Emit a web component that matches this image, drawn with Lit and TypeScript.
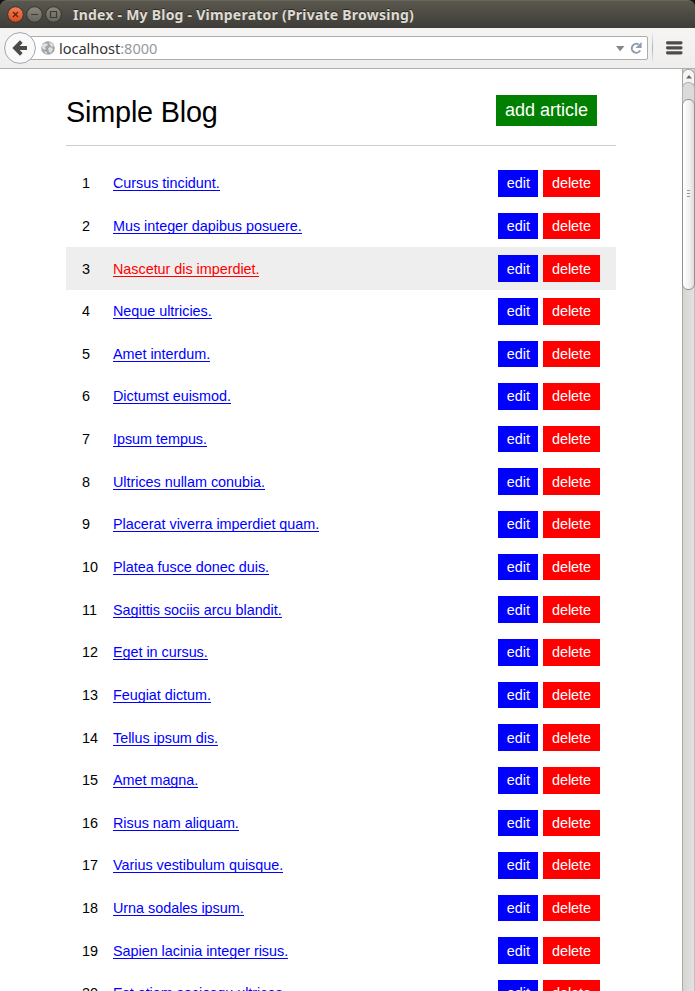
import { LitElement, html, css } from "lit";
import { customElement, property } from "lit/decorators.js";
import { classMap } from "lit/directives/class-map.js";

const ARTICLES = [
  "Cursus tincidunt.",
  "Mus integer dapibus posuere.",
  "Nascetur dis imperdiet.",
  "Neque ultricies.",
  "Amet interdum.",
  "Dictumst euismod.",
  "Ipsum tempus.",
  "Ultrices nullam conubia.",
  "Placerat viverra imperdiet quam.",
  "Platea fusce donec duis.",
  "Sagittis sociis arcu blandit.",
  "Eget in cursus.",
  "Feugiat dictum.",
  "Tellus ipsum dis.",
  "Amet magna.",
  "Risus nam aliquam.",
  "Varius vestibulum quisque.",
  "Urna sodales ipsum.",
  "Sapien lacinia integer risus.",
  "Est etiam sociosqu ultrices.",
];

@customElement("window-titlebar")
export class WindowTitlebar extends LitElement {
  @property() label = "";
  static styles = css`
    :host { display: block; background: #151412; }
    .bar {
      height: 28px; box-sizing: border-box; display: flex; align-items: center;
      padding-left: 7px; border-radius: 7px 7px 0 0;
      background: linear-gradient(#5a574e, #3e3d38);
      border-top: 1px solid #69665b;
    }
    svg { display: block; flex: none; }
    .label {
      margin-left: 11px; color: #dfdbd2; white-space: nowrap;
      font: bold 14px/26px "Noto Sans", sans-serif; letter-spacing: 0.23px;
      text-shadow: 0 -1px 0 #2a2925;
    }
  `;
  render() {
    return html`<div class="bar">
      <svg width="55" height="18" viewBox="0 0 55 18">
        <defs>
          <linearGradient id="o" x2="0" y2="1"><stop stop-color="#f48059"/><stop offset="1" stop-color="#dc4b18"/></linearGradient>
          <linearGradient id="g" x2="0" y2="1"><stop stop-color="#8b887f"/><stop offset="1" stop-color="#66635c"/></linearGradient>
        </defs>
        <g stroke="#35342f">
          <circle cx="8.5" cy="8.5" r="7.8" fill="url(#o)"/>
          <circle cx="27.5" cy="8.5" r="7.8" fill="url(#g)"/>
          <circle cx="46.5" cy="8.5" r="7.8" fill="url(#g)"/>
        </g>
        <path d="M6 6l5 5M11 6l-5 5" stroke="#5c2410" stroke-width="1.3"/>
        <path d="M24 8.5h7M43.5 5.5h6v6h-6z" fill="none" stroke="#3b3a35" stroke-width="1.2"/>
      </svg>
      <span class="label">${this.label}</span>
    </div>`;
  }
}

@customElement("browser-toolbar")
export class BrowserToolbar extends LitElement {
  @property() host = "";
  @property() port = "";
  static styles = css`
    :host { display: block; }
    .bar {
      height: 41px; box-sizing: border-box; display: flex; align-items: center;
      background: linear-gradient(#f6f5f4, #efeeed); border-bottom: 1px solid #b3b0ab;
      padding: 0 12px 0 4px;
    }
    svg { display: block; flex: none; }
    .back { position: relative; z-index: 1; }
    .url {
      flex: 1; height: 24px; box-sizing: border-box; margin-left: -8px;
      border: 1px solid #b0ada8; border-radius: 0 2px 2px 0; background: #fff;
      display: flex; align-items: center; padding: 0 5px 0 12px;
    }
    .text {
      flex: 1; margin-left: 4px; color: #333;
      font: 14.6px/22px "Noto Sans", sans-serif; letter-spacing: -0.05px;
    }
    .port { color: #999; }
    .sep { width: 1px; height: 32px; margin: 0 13px 0 4px; background: linear-gradient(#eef0f2, #a9b3bd, #eef0f2); }
  `;
  render() {
    return html`<div class="bar">
      <svg class="back" width="32" height="34" viewBox="0 0 32 34">
        <circle cx="16" cy="17" r="15.4" fill="#f9f9f8" stroke="#9ba8b6"/>
        <path d="M17.3 10.6L11 17l6.3 6.4M11.5 17H23" fill="none" stroke="#4b4b4b" stroke-width="3.8"/>
      </svg>
      <div class="url">
        <svg width="14" height="14" viewBox="0 0 14 14">
          <circle cx="7" cy="7" r="6.8" fill="#a3a3a3"/>
          <path d="M1 4l3-2 3 1-1 2-2 1 1 2-2 1-2-2zM8 1l3 1 2 3-2 1-2-2zM7 7l3-1 2 2-2 4-2-1zM3 10l3 1v2L4 12z" fill="#dedede"/>
        </svg>
        <span class="text">${this.host}<span class="port">:${this.port}</span></span>
        <svg width="26" height="16" viewBox="0 0 26 16">
          <path d="M0 6h8.4L4.2 11.3z" fill="#858585"/>
          <path d="M22.6 4.4A4.5 4.5 0 1 0 24.2 10.6" fill="none" stroke="#8f9dac" stroke-width="2"/>
          <path d="M25.6 2v6h-6.2z" fill="#8f9dac"/>
        </svg>
      </div>
      <div class="sep"></div>
      <svg width="17" height="14" viewBox="0 0 17 14">
        <g fill="#4c4c4c"><rect width="16.5" height="3.2" rx="1.4" y=".3"/><rect width="16.5" height="3.2" rx="1.4" y="5.3"/><rect width="16.5" height="3.2" rx="1.4" y="10.3"/></g>
      </svg>
    </div>`;
  }
}

@customElement("page-scrollbar")
export class PageScrollbar extends LitElement {
  static styles = css`
    :host {
      display: flex; flex-direction: column; width: 13px; box-sizing: border-box;
      border-left: 1px solid #aaa9a4; border-right: 1px solid #c5c1bd;
      background: linear-gradient(90deg, #d5d5d3, #e3e2e0);
    }
    .up, .thumb { margin: 0 -1px; box-sizing: border-box; border: 1px solid #a3a29e; background: linear-gradient(90deg, #fff, #f0f0ee 60%, #dedddb); }
    .up { height: 19px; margin-bottom: -6px; border-radius: 6px 6px 0 0; border-bottom: 0; display: flex; justify-content: center; padding-top: 5px; background: #f5f5f4; }
    .cap { height: 23px; margin: 0 -1px -6px; border: 1px solid #b0afab; border-bottom: 0; border-radius: 6px 6px 0 0; box-sizing: border-box; background: #dcdbd9; }
    .thumb { height: 191px; border-color: #92918d; border-radius: 6px; display: flex; align-items: center; justify-content: center; padding-bottom: 2px; }
    svg { display: block; }
  `;
  render() {
    return html`
      <div class="up"><svg width="6" height="4"><path d="M0 3.5L3 0l3 3.5z" fill="#666"/></svg></div>
      <div class="cap"></div>
      <div class="thumb"><svg width="3" height="8"><path d="M0 .5h3M0 3.5h3M0 6.5h3" stroke="#999"/></svg></div>
    `;
  }
}

@customElement("article-row")
export class ArticleRow extends LitElement {
  @property({ type: Number }) number = 0;
  @property() heading = "";
  @property({ type: Boolean }) active = false;
  static styles = css`
    :host { display: block; }
    .row {
      height: 42.641px; box-sizing: border-box; display: flex; align-items: center;
      padding: 0 16px;
    }
    .row.active { background: #eee; }
    .number { width: 31px; padding-bottom: 0.07px; }
    .cell { flex: 1; letter-spacing: -0.03px; padding-bottom: 0.07px; }
    .link { color: #00f; text-decoration: none; border-bottom: 1px solid; line-height: 16px; display: inline-block; height: 15px; }
    .active .link { color: #f00; }
    .actions { display: flex; gap: 5px; }
    .btn {
      height: 26.641px; box-sizing: border-box; padding-bottom: 0.07px; color: #fff;
      display: flex; align-items: center; justify-content: center;
    }
    .edit { width: 40px; background: #00f; text-indent: 0.6px; }
    .delete { width: 57px; background: #f00; }
  `;
  render() {
    return html`<div class=${classMap({ row: true, active: this.active })}>
      <span class="number">${this.number}</span>
      <span class="cell"><a class="link">${this.heading}</a></span>
      <div class="actions"><a class="btn edit">edit</a><a class="btn delete">delete</a></div>
    </div>`;
  }
}

@customElement("app-root")
export class AppRoot extends LitElement {
  static styles = css`
    :host {
      display: flex; flex-direction: column; height: 991px; overflow: hidden;
      background: #fff; color: #000; font: 14.4px "Liberation Sans", Arial, sans-serif;
    }
    .view { flex: 1; min-height: 0; display: flex; overflow: hidden; }
    .page { flex: 1; padding: 0 66px; overflow: hidden; }
    .header {
      height: 77px; box-sizing: border-box; border-bottom: 1px solid #ccc;
      display: flex; justify-content: space-between; align-items: flex-start; padding: 26px 19px 0 0;
    }
    .title { font-size: 28.8px; line-height: 34px; letter-spacing: -0.18px; }
    .add { width: 101px; height: 31px; background: #008000; color: #fff; font-size: 18px; line-height: 31px; text-align: center; }
    .list { padding-top: 15.95px; }
  `;
  render() {
    return html`
      <window-titlebar label="Index - My Blog - Vimperator (Private Browsing)"></window-titlebar>
      <browser-toolbar host="localhost" port="8000"></browser-toolbar>
      <div class="view">
        <div class="page">
          <div class="header"><span class="title">Simple Blog</span><a class="add">add article</a></div>
          <div class="list">
            ${ARTICLES.map((t, i) => html`<article-row .number=${i + 1} .heading=${t} .active=${i === 2}></article-row>`)}
          </div>
        </div>
        <page-scrollbar></page-scrollbar>
      </div>
    `;
  }
}
